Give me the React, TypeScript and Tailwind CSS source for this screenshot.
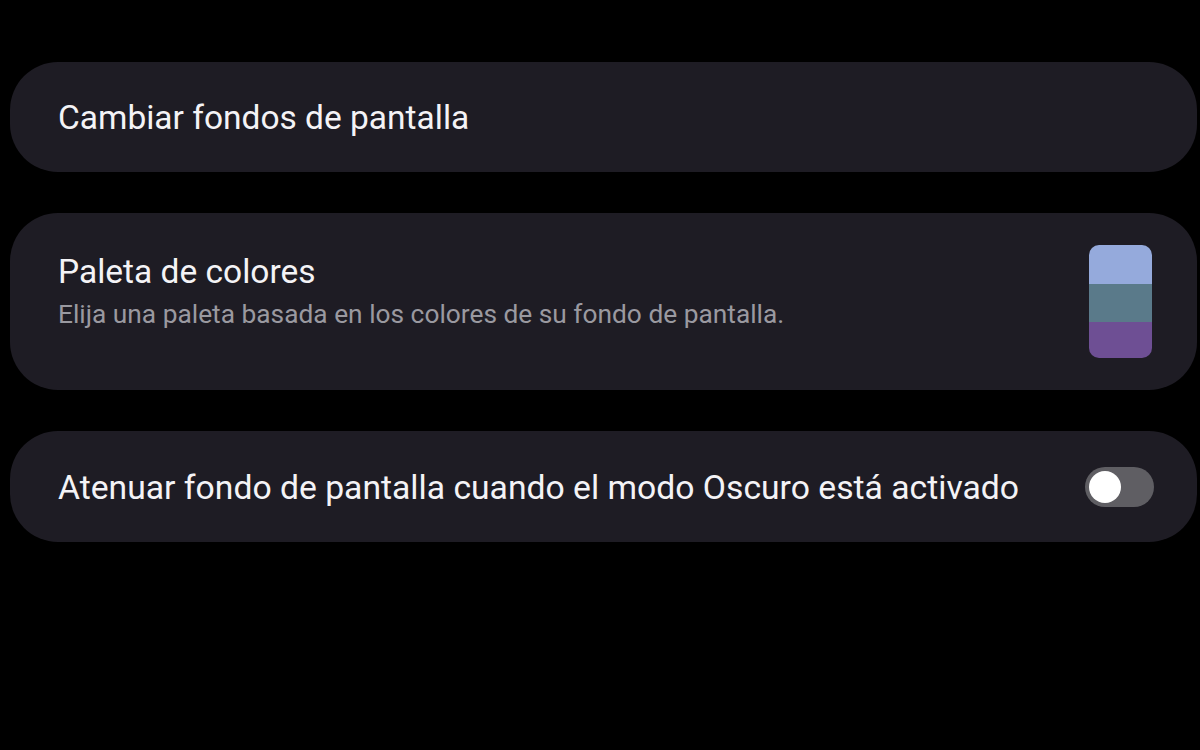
export default function App() {
  return (
    <div
      className="w-[1200px] h-[750px] bg-black overflow-hidden pt-[62px] pl-[10px] pr-[3px] flex flex-col gap-[41px]"
      style={{ fontFamily: "Roboto, 'Noto Sans', sans-serif" }}
    >
      <div className="h-[110px] rounded-[48px] bg-[#1e1c24] flex items-center pl-[48px]">
        <span className="text-[33.5px] leading-[40px] text-[#f4f3f6] mt-[2px]">Cambiar fondos de pantalla</span>
      </div>

      <div className="h-[177px] rounded-[48px] bg-[#1e1c24] flex items-center justify-between pl-[48px] pr-[45px]">
        <div className="flex flex-col gap-[6px] -mt-[21px]">
          <span className="text-[33.5px] leading-[40px] text-[#f4f3f6]">Paleta de colores</span>
          <span className="text-[26.3px] leading-[32px] text-[#9a99a0]">
            Elija una paleta basada en los colores de su fondo de pantalla.
          </span>
        </div>
        <div className="w-[63px] h-[113px] rounded-[10px] overflow-hidden flex flex-col">
          <div className="h-[39px] bg-[#95aadc]" />
          <div className="h-[38px] bg-[#5a7a8a]" />
          <div className="flex-1 bg-[#6e4f94]" />
        </div>
      </div>

      <div className="h-[111px] rounded-[48px] bg-[#1e1c24] flex items-center justify-between pl-[48px] pr-[43px]">
        <span className="text-[33.7px] leading-[40px] text-[#f4f3f6] mt-[2px]">
          Atenuar fondo de pantalla cuando el modo Oscuro está activado
        </span>
        <div className="w-[69px] h-[40px] rounded-full bg-[#5f5e63] flex items-center pl-[4px]">
          <div className="w-[32px] h-[32px] rounded-full bg-white" />
        </div>
      </div>
    </div>
  );
}
